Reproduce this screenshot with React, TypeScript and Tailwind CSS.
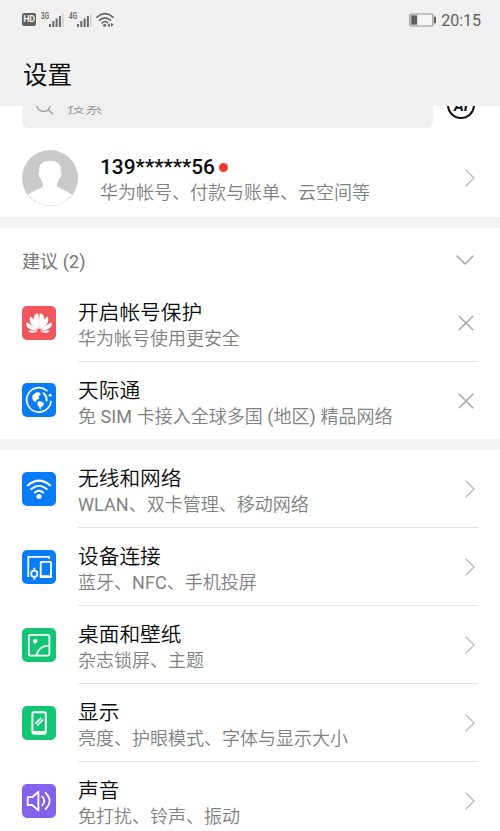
import type { ReactNode } from "react";

const stroke = {
  fill: "none",
  stroke: "currentColor",
  strokeLinecap: "round" as const,
  strokeLinejoin: "round" as const,
};

function Signal({ label }: { label: string }) {
  return (
    <svg className="h-[18px] w-[24px]" viewBox="0 0 24 18">
      <text x="0" y="8" fontSize="8.5" fontWeight="600" textLength="8" lengthAdjust="spacingAndGlyphs" fill="#606060">
        {label}
      </text>
      <g fill="#686868">
        <rect x="8" y="13" width="2" height="3" />
        <rect x="11.3" y="10" width="2" height="6" />
        <rect x="14.6" y="7.5" width="2" height="8.5" />
        <rect x="17.9" y="5" width="2" height="11" />
        <rect x="21.2" y="2.5" width="1.2" height="13.5" fill="#c4c4c4" />
      </g>
    </svg>
  );
}

function StatusBar() {
  return (
    <div className="flex h-[39px] items-center pr-[19px] pl-[22px] text-[#606060]">
      <span className="flex h-[13px] w-[14px] items-center justify-center rounded-[2px] bg-[#606060] text-[9px] leading-none font-bold tracking-[-0.3px] text-[#f0f0f0]">
        HD
      </span>
      <span className="ml-[5px] flex gap-[4px]">
        <Signal label="3G" />
        <Signal label="4G" />
      </span>
      <svg className="ml-[3px] h-[16px] w-[18px]" viewBox="0 0 18 16">
        <g {...stroke} strokeWidth="1.6">
          <path d="M1 5.2Q9-1.8 17 5.2" />
          <path d="M3.6 8.2Q9 3.4 14.4 8.2" />
          <path d="M6 11Q9 8.2 11.6 10.6" />
        </g>
        <circle cx="8.6" cy="13.3" r="1.5" fill="#606060" />
        <path d="M11.2 13.3l2.6-2v4zM17.6 12.7l-2.6-2v4z" fill="#606060" />
      </svg>
      <svg className="ml-auto h-[14px] w-[28px]" viewBox="0 0 28 14">
        <rect x="0.9" y="1" width="23" height="12" rx="1.5" fill="#f5f5f5" stroke="#909090" strokeWidth="1.2" />
        <rect x="2.2" y="2.3" width="6" height="9.4" fill="#606060" />
        <rect x="25" y="3.6" width="2" height="6.8" rx="0.6" fill="#606060" />
      </svg>
      <span className="ml-[4px] pt-[2px] text-[16px] leading-5">20:15</span>
    </div>
  );
}

function Chevron({ down = false }: { down?: boolean }) {
  return down ? (
    <svg className="mr-[25px] h-[12px] w-[20px] text-[#a8a8a8]" viewBox="0 0 20 12">
      <path {...stroke} strokeWidth="1.6" d="M2 2l8 8 8-8" />
    </svg>
  ) : (
    <svg className="mr-[24px] h-[20px] w-[12px] text-[#c2c2c2]" viewBox="0 0 12 20">
      <path {...stroke} strokeWidth="1.6" d="M2 2l8 8-8 8" />
    </svg>
  );
}

function Close() {
  return (
    <svg className="mr-[26px] h-[16px] w-[16px] text-[#a6a6a6]" viewBox="0 0 16 16">
      <path {...stroke} strokeWidth="1.5" d="M1.2 1.2l13.6 13.6M14.8 1.2L1.2 14.8" />
    </svg>
  );
}

const petals = [
  "M15.6 25.6C13 27 7.5 27.6 6.2 24.7C9 24 12.5 24.6 15.6 25.6Z",
  "M15.4 24.6C11 24.7 2.8 22.5 4.4 16.4C8 17.8 13 21 15.4 24.6Z",
  "M15.9 23.7C11 21.5 5.2 15.5 8.6 10.6C12 12.7 15.2 18.5 15.9 23.7Z",
  "M16.6 23.3C13.2 19.5 10.2 12.5 13 8.8C14 7.7 15.3 7.3 16.2 7.6C17.1 12.5 17.2 18.5 16.6 23.3Z",
];

const icons: Record<string, ReactNode> = {
  huawei: (
    <g fill="#fff">
      {petals.map((d) => (
        <path key={d} d={d} />
      ))}
      <g transform="translate(34 0) scale(-1 1)">
        {petals.map((d) => (
          <path key={d} d={d} />
        ))}
      </g>
    </g>
  ),
  globe: (
    <g>
      <path {...stroke} strokeWidth="1.7" d="M24.8 7.6A12.2 12.2 0 1 0 29 18.5" />
      <circle cx="28.2" cy="12.2" r="1.5" fill="#fff" />
      <path
        fill="#fff"
        d="M10.6 12.2l3.4-2.8 3.2-.2 1.6 2.4-2.2 1.6.7 2.6-2.6 1-.5 2-2.3-.3-1.7-3zM16 18.3l3.4.2 2.6 2-.9 2.6-2 1-.8 2.9-1.5-3.5-1.5-2.1z"
      />
      <path {...stroke} strokeWidth="2" d="M21.5 10.4Q25 13.2 24.5 17.4" />
    </g>
  ),
  wifi: (
    <g>
      <g {...stroke} strokeWidth="2">
        <path d="M5.8 13.4Q17 3.8 28.2 13.4" />
        <path d="M9.3 17.1Q17 10.3 24.7 17.1" />
        <path d="M12.8 20.6Q17 16.8 21.2 20.6" />
      </g>
      <circle cx="17" cy="24.6" r="2.5" fill="#fff" />
    </g>
  ),
  devices: (
    <g {...stroke} strokeWidth="1.8">
      <path strokeLinecap="square" d="M6.3 26V6.8H27.2V8" />
      <rect x="18.7" y="11.8" width="10.3" height="15.4" rx="0.6" />
      <path strokeWidth="2.6" d="M19 26.5h9.8" />
      <circle cx="12.3" cy="23.7" r="3.1" />
      <path d="M12.3 18.4v2M12.3 27v2" />
    </g>
  ),
  picture: (
    <g>
      <rect {...stroke} strokeWidth="1.7" x="6.8" y="6.8" width="20.6" height="20.8" rx="1.6" />
      <circle cx="13.2" cy="13.2" r="2.2" fill="#fff" />
      <path {...stroke} strokeWidth="1.7" d="M14.5 27Q17 18 27 17.5" />
    </g>
  ),
  phone: (
    <g {...stroke} strokeWidth="1.9">
      <rect x="10.4" y="6.3" width="13.4" height="21.6" rx="1.8" />
      <path strokeWidth="2.6" d="M11.3 26.4h11.6" />
      <path strokeWidth="1.7" d="M13.8 17.2l4.8-4.8M15.7 19l4.9-4.9" />
    </g>
  ),
  sound: (
    <g {...stroke} strokeWidth="1.8">
      <path d="M5.7 13.2h4.5l6.2-5.4v18.6l-6.2-5.4H5.7z" />
      <path d="M20.2 12.7q4.2 4.3 0 8.6" />
      <path d="M23.6 9q8 8 0 16" />
    </g>
  ),
};

interface Item {
  icon: string;
  tile: string;
  title: string;
  note: string;
}

const suggestions: Item[] = [
  { icon: "huawei", tile: "bg-[#f0565c]", title: "开启帐号保护", note: "华为帐号使用更安全" },
  { icon: "globe", tile: "bg-[#087cf3]", title: "天际通", note: "免 SIM 卡接入全球多国 (地区) 精品网络" },
];

const settings: Item[] = [
  { icon: "wifi", tile: "bg-[#087cf8]", title: "无线和网络", note: "WLAN、双卡管理、移动网络" },
  { icon: "devices", tile: "bg-[#087cf8]", title: "设备连接", note: "蓝牙、NFC、手机投屏" },
  { icon: "picture", tile: "bg-[#12c674]", title: "桌面和壁纸", note: "杂志锁屏、主题" },
  { icon: "phone", tile: "bg-[#12c674]", title: "显示", note: "亮度、护眼模式、字体与显示大小" },
  { icon: "sound", tile: "bg-[#8262ea]", title: "声音", note: "免打扰、铃声、振动" },
];

// Latin runs are set one weight heavier than the Chinese text around them.
function Note({ text }: { text: string }) {
  return (
    <div className="text-[18px] leading-[26px] font-[350] text-[#808080]">
      {text.split(/([A-Z() ]+)/).map((part, i) =>
        i % 2 ? (
          <span key={i} className="font-normal tracking-[0.1px]">
            {part}
          </span>
        ) : (
          part
        ),
      )}
    </div>
  );
}

function Row({ item, last, action }: { item: Item; last: boolean; action: ReactNode }) {
  return (
    <div className={`flex shrink-0 items-center pl-[22px] ${last ? "h-[77px]" : "h-[78px]"}`}>
      <span className={`mb-px h-[34px] w-[34px] shrink-0 rounded-[5px] text-white ${item.tile}`}>
        <svg className="h-full w-full" viewBox="0 0 34 34">
          {icons[item.icon]}
        </svg>
      </span>
      <div
        className={`mr-[22px] ml-[22px] flex h-full flex-1 items-center ${last ? "" : "border-b border-[#e2e2e2]"}`}
      >
        <div className="flex-1 pt-[6px] whitespace-nowrap">
          <div className="text-[20.7px] leading-[26px] font-[350] text-[#0c0c0c]">{item.title}</div>
          <Note text={item.note} />
        </div>
        <span className="-mr-[22px]">{action}</span>
      </div>
    </div>
  );
}

export default function App() {
  return (
    <div className="flex h-[831px] w-[500px] flex-col overflow-hidden bg-white font-[Roboto,'Noto_Sans_CJK_SC',sans-serif]">
      <header className="h-[106px] shrink-0 bg-[#f0f0f0]">
        <StatusBar />
        <h1 className="pt-[19px] pl-[23px] text-[24.5px] leading-[36px] text-[#0c0c0c]">设置</h1>
      </header>

      <div className="flex h-[22px] shrink-0 items-end overflow-hidden pl-[22px]">
        <div className="flex h-[42px] w-[411px] shrink-0 items-center rounded-[6px] bg-[#f0f0f0] pl-[13px] text-[#a0a0a0]">
          <svg className="h-[20px] w-[20px]" viewBox="0 0 20 20">
            <g {...stroke} strokeWidth="1.5">
              <circle cx="8.6" cy="8" r="6.6" />
              <path d="M13.4 12.8l4 4" />
            </g>
          </svg>
          <span className="ml-[12px] text-[18px] leading-[26px] font-[350]">搜索</span>
        </div>
        <div className="mb-[9px] ml-[14px] flex h-[28px] w-[28px] shrink-0 items-center justify-center rounded-full border-2 border-[#111] pt-[3px] text-[15px] leading-none font-bold text-[#111] italic">
          AI
        </div>
      </div>

      <div className="flex h-[89px] shrink-0 items-center pt-[10px] pl-[22px]">
        <svg className="h-[56px] w-[56px]" viewBox="0 0 56 56">
          <circle cx="28" cy="28" r="28" fill="#c9c9c9" />
          <path
            fill="#fff"
            d="M28 10.7C34 10.7 38.8 13.5 38.8 18.5L38.6 21.8C40.3 22.6 39.4 28 37.3 28.6C36.8 31 36 32.3 35 33.5V36.5C39 39.5 46 41.5 50 44.6A27.5 27.5 0 0 1 6 44.6C10 41.5 17 39.5 21 36.5V33.5C20 32.3 19.2 31 18.7 28.6C16.6 28 15.7 22.6 17.4 21.8L17.2 18.5C17.2 13.5 22 10.7 28 10.7Z"
          />
        </svg>
        <div className="ml-[22px] flex-1 pt-[5px] whitespace-nowrap">
          <div className="flex items-center text-[20.9px] leading-[26px] font-medium text-[#0c0c0c]">
            139******56
            <span className="ml-[4px] h-[9px] w-[9px] rounded-full bg-[#f03a2c]" />
          </div>
          <Note text="华为帐号、付款与账单、云空间等" />
        </div>
        <Chevron />
      </div>

      <div className="h-[11px] shrink-0 bg-[#f2f2f2]" />

      <div className="flex h-[56px] shrink-0 items-center justify-between pt-[8px] pl-[22px]">
        <h2 className="pt-[3px] text-[18px] leading-[26px] tracking-[0.1px] text-[#757575]">建议 (2)</h2>
        <Chevron down />
      </div>
      {suggestions.map((item, i) => (
        <Row key={item.title} item={item} last={i === suggestions.length - 1} action={<Close />} />
      ))}

      <div className="h-[11px] shrink-0 bg-[#f2f2f2]" />

      {settings.map((item) => (
        <Row key={item.title} item={item} last={false} action={<Chevron />} />
      ))}
    </div>
  );
}
